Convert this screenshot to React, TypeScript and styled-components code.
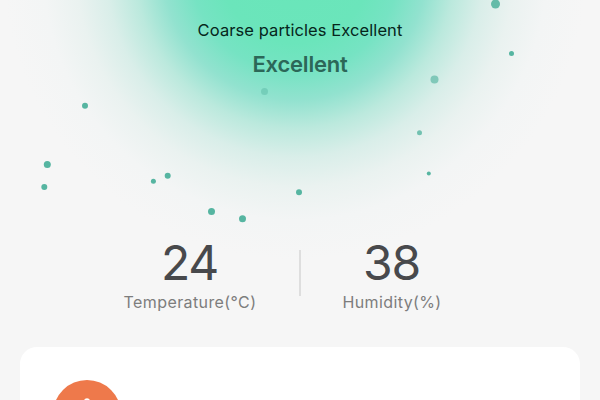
import styled, { createGlobalStyle } from "styled-components";

const GlobalStyle = createGlobalStyle`
  body {
    margin: 0;
    background-color: #f6f6f6;
    font-family: Inter, "Liberation Sans", sans-serif;
  }
`;

const Screen = styled.main`
  position: relative;
  display: flex;
  flex-direction: column;
  height: 400px;
  overflow: hidden;
  background: radial-gradient(
    circle at 295px -32px,
    #69e6b9 0,
    #6be5bb 75px,
    #76e3c3 104px,
    #92e2cf 132px,
    #bbe9dd 160px,
    #d9eee9 189px,
    #eaf2f0 219px,
    #f3f5f5 252px,
    #f6f6f6 292px
  );
`;

const AirQuality = styled.section`
  display: flex;
  flex-direction: column;
  flex-shrink: 0;
  align-items: center;
  height: 238px;
  padding-top: 19px;
  box-sizing: border-box;
`;

const Pollutant = styled.p`
  margin: 0;
  color: #06261c;
  font-size: 16.5px;
  line-height: 22px;
  letter-spacing: 0.08px;
`;

const Rating = styled.h1`
  margin: 9px 0 0;
  color: #2c6758;
  font-size: 22px;
  font-weight: 600;
  line-height: 28px;
  letter-spacing: -0.2px;
`;

const Particle = styled.i<{ x: number; y: number; size: number; opacity?: number }>`
  position: absolute;
  left: 0;
  top: 0;
  width: ${({ size }) => size}px;
  height: ${({ size }) => size}px;
  border-radius: 50%;
  background-color: #56b5a1;
  opacity: ${({ opacity = 1 }) => opacity};
  transform: ${({ x, y, size }) => `translate(${x - size / 2}px, ${y - size / 2}px)`};
`;

const Climate = styled.section`
  display: grid;
  flex-shrink: 0;
  grid-template-columns: 132px 2px 98px;
  column-gap: 42.5px;
  height: 109px;
  padding-left: 124px;
  box-sizing: border-box;
`;

const Reading = styled.div`
  display: flex;
  flex-direction: column;
  align-items: center;
  white-space: nowrap;
`;

const Value = styled.span`
  margin-left: -1px;
  color: #48494c;
  font-size: 48px;
  line-height: 49px;
  letter-spacing: -1.2px;
`;

const Label = styled.span`
  margin-top: 4px;
  color: #7d7d7d;
  font-size: 16px;
  line-height: 22px;
  letter-spacing: 0.4px;
`;

const Divider = styled.div`
  width: 2px;
  height: 46px;
  margin-top: 12px;
  background-color: #dedede;
`;

const Card = styled.section`
  flex: 1;
  margin: 0 20px;
  padding: 33px 33px 0;
  border-radius: 17px 17px 0 0;
  background-color: #fff;
`;

const CardIcon = styled.div`
  display: flex;
  justify-content: center;
  width: 68px;
  height: 68px;
  padding-top: 18px;
  box-sizing: border-box;
  border-radius: 50%;
  background-color: #ee794b;
`;

const particles = [
  { x: 495.5, y: 4, size: 9, opacity: 0.9 },
  { x: 511.5, y: 53.5, size: 5 },
  { x: 434.5, y: 79.5, size: 8, opacity: 0.65 },
  { x: 264.5, y: 91.5, size: 7, opacity: 0.45 },
  { x: 85, y: 105.7, size: 6 },
  { x: 419.5, y: 132.8, size: 5, opacity: 0.8 },
  { x: 47.3, y: 164.5, size: 7 },
  { x: 44.3, y: 187, size: 6 },
  { x: 153.4, y: 181.2, size: 5 },
  { x: 167.7, y: 175.8, size: 6 },
  { x: 428.8, y: 173.4, size: 4 },
  { x: 299, y: 192.3, size: 6 },
  { x: 211.5, y: 211.5, size: 7 },
  { x: 242.5, y: 218.8, size: 7 },
];

export default function App() {
  return (
    <>
      <GlobalStyle />
      <Screen>
        <AirQuality>
          <Pollutant>Coarse particles Excellent</Pollutant>
          <Rating>Excellent</Rating>
          {particles.map((particle) => (
            <Particle key={`${particle.x}-${particle.y}`} {...particle} />
          ))}
        </AirQuality>
        <Climate>
          <Reading>
            <Value>24</Value>
            <Label>Temperature(°C)</Label>
          </Reading>
          <Divider />
          <Reading>
            <Value>38</Value>
            <Label>Humidity(%)</Label>
          </Reading>
        </Climate>
        <Card>
          <CardIcon>
            <svg width="32" height="32" viewBox="0 0 32 32" fill="none">
              <path d="M14 20V3.2a2 2 0 0 1 4 0V20" stroke="#fff" strokeWidth="2" />
            </svg>
          </CardIcon>
        </Card>
      </Screen>
    </>
  );
}
